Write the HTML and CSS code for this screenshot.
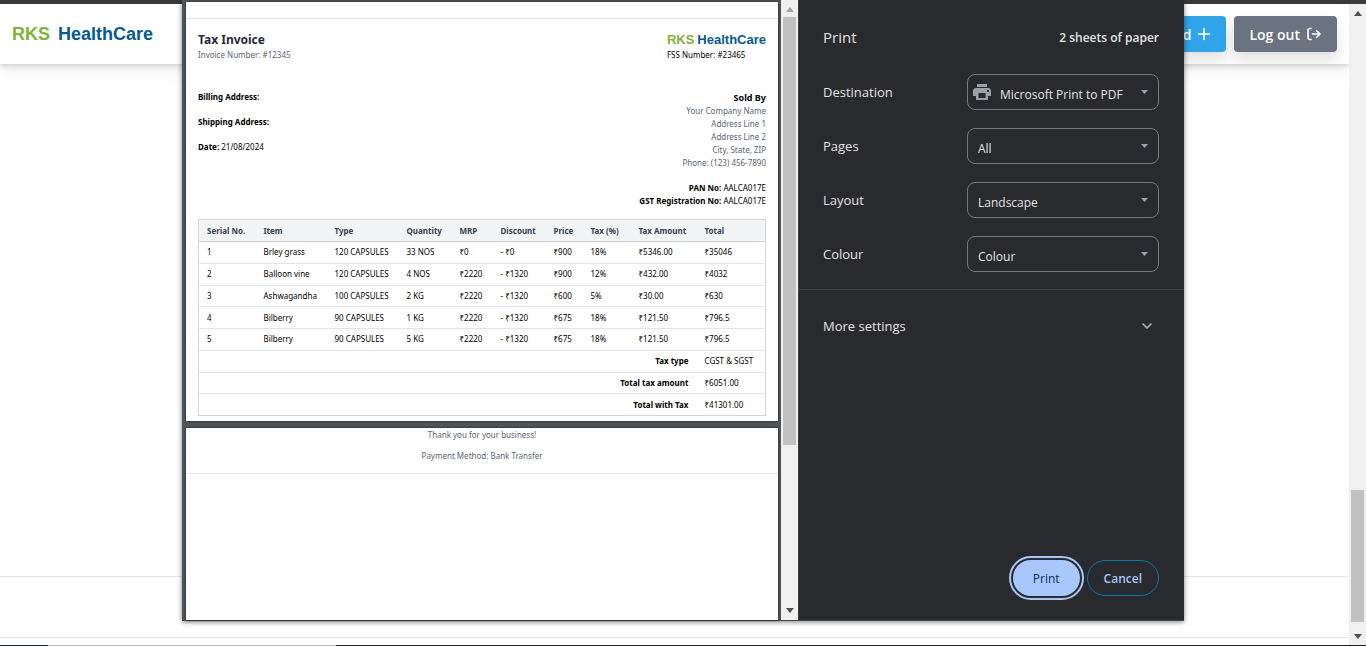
FILE: index.html
```html
<!DOCTYPE html>
<html lang="en">
<head>
<meta charset="utf-8">
<title>RKS HealthCare - Print invoice</title>
<link rel="stylesheet" href="styles.css">
</head>
<body>
<div class="app">
  <div class="app-main">
    <header class="app-header">
      <a class="logo" href="#"><span class="logo-green">RKS</span><span class="logo-blue">HealthCare</span></a>
      <nav class="actions">
        <button class="btn btn-blue" type="button">Add
          <svg width="14" height="14" viewBox="0 0 14 14" fill="none" stroke="currentColor" stroke-width="1.600" stroke-linecap="round"><path d="M7 1.500v11M1.500 7h11"/></svg>
        </button>
        <button class="btn btn-grey" type="button">Log out
          <svg width="16" height="14" viewBox="0 0 16 14" fill="none" stroke="currentColor" stroke-width="1.600" stroke-linecap="round" stroke-linejoin="round"><path d="M5 1.500H4Q2 1.500 2 3.500v7q0 2 2 2h1M6.500 7H14M10.500 3.500 14 7l-3.500 3.500"/></svg>
        </button>
      </nav>
    </header>
    <main class="app-body"></main>
    <footer class="app-footer"></footer>
  </div>
  <div class="scrollbar">
    <svg class="arrow" viewBox="0 0 8 5"><path d="M4 0 8 5H0z"/></svg>
    <div class="track track-low"><div class="thumb thumb-page"></div></div>
    <svg class="arrow" viewBox="0 0 8 5"><path d="M0 0h8L4 5z"/></svg>
  </div>
</div>

<div class="dialog" role="dialog" aria-label="Print">
  <div class="preview">
    <div class="sheets">
      <section class="sheet sheet-first">
        <div class="sheet-top"></div>
        <div class="invoice">
          <div class="row head">
            <div>
              <h1 class="title">Tax Invoice</h1>
              <p class="muted">Invoice Number: #12345</p>
            </div>
            <div>
              <div class="logo logo-small"><span class="logo-green">RKS</span><span class="logo-blue">HealthCare</span></div>
              <p>FSS Number: #23465</p>
            </div>
          </div>
          <div class="row parties">
            <div class="buyer">
              <p><b>Billing Address:</b></p>
              <p><b>Shipping Address:</b></p>
              <p><b>Date:</b> 21/08/2024</p>
            </div>
            <div class="seller">
              <h2 class="subtitle">Sold By</h2>
              <p class="muted">Your Company Name</p>
              <p class="muted">Address Line 1</p>
              <p class="muted">Address Line 2</p>
              <p class="muted">City, State, ZIP</p>
              <p class="muted">Phone: (123) 456-7890</p>
              <div class="tax-ids">
                <p><b>PAN No:</b> AALCA017E</p>
                <p><b>GST Registration No:</b> AALCA017E</p>
              </div>
            </div>
          </div>
          <table class="items">
            <colgroup><col class="c-serial"><col class="c-item"><col class="c-type"><col class="c-mid"><col class="c-mrp"><col class="c-mid"><col class="c-price"><col class="c-tax"><col class="c-amount"><col></colgroup>
            <thead>
              <tr><th>Serial No.</th><th>Item</th><th>Type</th><th>Quantity</th><th>MRP</th><th>Discount</th><th>Price</th><th>Tax (%)</th><th>Tax Amount</th><th>Total</th></tr>
            </thead>
            <tbody>
              <tr><td>1</td><td>Brley grass</td><td>120 CAPSULES</td><td>33 NOS</td><td>₹0</td><td>- ₹0</td><td>₹900</td><td>18%</td><td>₹5346.00</td><td>₹35046</td></tr>
              <tr><td>2</td><td>Balloon vine</td><td>120 CAPSULES</td><td>4 NOS</td><td>₹2220</td><td>- ₹1320</td><td>₹900</td><td>12%</td><td>₹432.00</td><td>₹4032</td></tr>
              <tr><td>3</td><td>Ashwagandha</td><td>100 CAPSULES</td><td>2 KG</td><td>₹2220</td><td>- ₹1320</td><td>₹600</td><td>5%</td><td>₹30.00</td><td>₹630</td></tr>
              <tr><td>4</td><td>Bilberry</td><td>90 CAPSULES</td><td>1 KG</td><td>₹2220</td><td>- ₹1320</td><td>₹675</td><td>18%</td><td>₹121.50</td><td>₹796.5</td></tr>
              <tr><td>5</td><td>Bilberry</td><td>90 CAPSULES</td><td>5 KG</td><td>₹2220</td><td>- ₹1320</td><td>₹675</td><td>18%</td><td>₹121.50</td><td>₹796.5</td></tr>
              <tr><td class="sum" colspan="9">Tax type</td><td>CGST &amp; SGST</td></tr>
              <tr><td class="sum" colspan="9">Total tax amount</td><td>₹6051.00</td></tr>
              <tr><td class="sum" colspan="9">Total with Tax</td><td>₹41301.00</td></tr>
            </tbody>
          </table>
        </div>
      </section>
      <section class="sheet sheet-second">
        <div class="thanks">
          <p>Thank you for your business!</p>
          <p>Payment Method: Bank Transfer</p>
        </div>
      </section>
    </div>
    <div class="scrollbar">
      <svg class="arrow arrow-off" viewBox="0 0 8 5"><path d="M4 0 8 5H0z"/></svg>
      <div class="track"><div class="thumb thumb-preview"></div></div>
      <svg class="arrow" viewBox="0 0 8 5"><path d="M0 0h8L4 5z"/></svg>
    </div>
  </div>
  <form class="settings">
    <div class="settings-head"><h2 class="settings-title">Print</h2><span class="count">2 sheets of paper</span></div>
    <div class="fields">
      <div class="field">
        <label for="destination">Destination</label>
        <div class="picker">
          <svg class="printer" viewBox="0 0 18 16"><path fill="#9aa0a6" fill-rule="evenodd" d="M4 0h10v3H4zM3 4h12a3 3 0 0 1 3 3v5h-3v4H3v-4H0V7a3 3 0 0 1 3-3zM5.500 9v5h7V9zM14 6v2h2V6z"/></svg>
          <select id="destination" class="select with-icon"><option>Microsoft Print to PDF</option></select>
          <svg class="caret" viewBox="0 0 7 4"><path d="M0 0h7L3.500 4z"/></svg>
        </div>
      </div>
      <div class="field">
        <label for="pages">Pages</label>
        <div class="picker">
          <select id="pages" class="select"><option>All</option></select>
          <svg class="caret" viewBox="0 0 7 4"><path d="M0 0h7L3.500 4z"/></svg>
        </div>
      </div>
      <div class="field">
        <label for="layout">Layout</label>
        <div class="picker">
          <select id="layout" class="select"><option>Landscape</option></select>
          <svg class="caret" viewBox="0 0 7 4"><path d="M0 0h7L3.500 4z"/></svg>
        </div>
      </div>
      <div class="field">
        <label for="colour">Colour</label>
        <div class="picker">
          <select id="colour" class="select"><option>Colour</option></select>
          <svg class="caret" viewBox="0 0 7 4"><path d="M0 0h7L3.500 4z"/></svg>
        </div>
      </div>
    </div>
    <button class="more" type="button">More settings
      <svg width="10" height="6" viewBox="0 0 10 6" fill="none" stroke="#b0b3b8" stroke-width="1.500"><path d="M.5.500 5 5 9.500.500"/></svg>
    </button>
    <div class="buttons">
      <button class="pill pill-print" type="button">Print</button>
      <button class="pill pill-cancel" type="button">Cancel</button>
    </div>
  </form>
</div>
</body>
</html>
```
FILE: styles.css
```css
* { box-sizing: border-box; }

body {
  margin: 0;
  background: #fff;
  color: #000;
  font-family: "Noto Sans", "Open Sans", sans-serif;
  overflow: hidden;
}

h1, h2, p { margin: 0; }

button, select { font-family: inherit; }

/* Application behind the dialog */
.app {
  display: flex;
  height: 100vh;
  border-top: 4px solid #3b3b3b;
}

.app::after {
  content: "";
  position: absolute;
  left: 0;
  right: 0;
  bottom: 0;
  height: 1px;
  background: linear-gradient(90deg, #1c2226 48px, #bcbcbc 48px, #bcbcbc 336px, #202020 336px);
}

.app-main {
  flex: 1;
  display: flex;
  flex-direction: column;
}

.app-header {
  display: flex;
  justify-content: space-between;
  align-items: center;
  height: 60px;
  padding: 0 12px;
  box-shadow: 0 8px 16px rgba(0, 0, 0, 0.06), 0 2px 5px rgba(0, 0, 0, 0.14);
}

.logo {
  display: flex;
  gap: 8px;
  font: bold 18px/24px "Liberation Sans", Arial, sans-serif;
  text-decoration: none;
}

.logo-green { color: #7fb239; }
.logo-blue { color: #045a92; }

.logo-small {
  gap: 3px;
  font-size: 13px;
  line-height: 16px;
}

.actions {
  display: flex;
  gap: 8px;
}

.btn {
  display: flex;
  align-items: center;
  gap: 6px;
  height: 36px;
  padding: 0 15px;
  border: 0;
  border-radius: 4px;
  color: #fff;
  font-family: "Open Sans", "Noto Sans", sans-serif;
  font-size: 14px;
  font-weight: 600;
  box-shadow: 0 8px 14px rgba(0, 0, 0, 0.12);
}

.btn-blue { background: #30a4e8; }
.btn-grey { background: #6b7280; }

.app-body {
  flex: 1;
  border-bottom: 1px solid #e5e7eb;
}

.app-footer {
  height: 61px;
  margin-bottom: 8px;
  border-bottom: 1px solid #e5e7eb;
}

/* Scroll bars */
.scrollbar {
  display: flex;
  flex-direction: column;
  align-items: center;
  width: 17px;
  padding: 7px 0 7px;
  background: #f0f0f0;
}

.arrow {
  width: 8px;
  height: 5px;
  fill: #505050;
}

.arrow-off { fill: #a3a3a3; }

.track {
  flex: 1;
  display: flex;
  flex-direction: column;
  width: 13px;
  margin: 5px 0;
}

.track-low {
  justify-content: flex-end;
  margin-bottom: 12px;
}

.thumb { background: #c1c1c1; }
.thumb-page { height: 22%; }
.thumb-preview { height: 73%; }

/* Print dialog */
.dialog {
  position: absolute;
  top: 0;
  left: 50%;
  display: flex;
  width: 1002px;
  max-width: 100%;
  height: calc(100vh - 25px);
  margin-left: -501px;
  background: #292a2d;
  border-bottom: 1px solid #454545;
  box-shadow: 0 1px 5px rgba(0, 0, 0, 0.5);
}

.preview {
  display: flex;
  width: 617px;
  background: #525659;
  border-right: 1px solid #3c3d40;
}

.sheets {
  flex: 1;
  display: flex;
  flex-direction: column;
  gap: 7px;
  padding: 2px 3px 0 4px;
}

.sheet {
  background: #fff;
  box-shadow: 0 0 3px rgba(0, 0, 0, 0.6);
  font-size: 8px;
  line-height: 13px;
}

.sheet-second { flex: 1; }

.sheet-top {
  height: 17px;
  border-bottom: 1px solid #e5e7eb;
}

.invoice { padding: 13px 12px 5px; }

.row {
  display: flex;
  justify-content: space-between;
}

.head { height: 58px; }

.title {
  color: #1f2937;
  font-size: 12px;
  line-height: 16px;
}

.muted { color: #5b6472; }

.parties { height: 129px; }

.buyer {
  display: flex;
  flex-direction: column;
  gap: 12px;
}

.seller {
  padding-top: 1px;
  text-align: right;
}

.subtitle {
  font-size: 9px;
  line-height: 13px;
}

.tax-ids { margin-top: 12px; }

.items {
  width: 100%;
  height: 197px;
  table-layout: fixed;
  border-collapse: collapse;
  border: 1px solid #d1d5db;
  line-height: 12px;
}

.items th, .items td {
  padding: 0 8px;
  text-align: left;
  white-space: nowrap;
}

.items th { height: 22px; }

.items tr { border-bottom: 1px solid #e2e4e8; }
.items tr:last-child { border-bottom-color: #d1d5db; }

.items thead {
  background: #f3f4f6;
  color: #374151;
}

.items thead tr { border-bottom-color: #e2e4e8; }

.items .sum {
  text-align: right;
  font-weight: bold;
}

.c-serial { width: 57px; }
.c-item { width: 71px; }
.c-type { width: 72px; }
.c-mid { width: 53px; }
.c-mrp { width: 41px; }
.c-price { width: 37px; }
.c-tax { width: 48px; }
.c-amount { width: 66px; }

.thanks {
  display: flex;
  flex-direction: column;
  gap: 8px;
  padding-bottom: 11px;
  border-bottom: 1px solid #e5e7eb;
  color: #5b6472;
  text-align: center;
}

/* Settings column */
.settings {
  flex: 1;
  display: flex;
  flex-direction: column;
  color: #e3e3e3;
  font-family: "Open Sans", "Noto Sans", sans-serif;
  font-size: 13px;
}

.settings-head {
  display: flex;
  justify-content: space-between;
  align-items: center;
  height: 74px;
  padding: 0 25px 0 24px;
}

.settings-title {
  font-size: 15px;
  font-weight: 400;
}

.count {
  font-size: 12px;
  font-weight: 600;
}

.fields {
  display: flex;
  flex-direction: column;
  gap: 18px;
  padding: 0 25px 17px 24px;
  border-bottom: 1px solid #3f4042;
}

.field {
  display: flex;
  justify-content: space-between;
  align-items: center;
}

.picker {
  position: relative;
  width: 192px;
}

.select {
  display: block;
  width: 100%;
  height: 36px;
  padding: 4px 24px 0 10px;
  appearance: none;
  background: transparent;
  border: 1px solid #77787a;
  border-radius: 8px;
  color: #e3e3e3;
  font-size: 12px;
}

.with-icon { padding-left: 32px; }

.printer {
  position: absolute;
  left: 6px;
  top: 10px;
  width: 18px;
  height: 16px;
}

.caret {
  position: absolute;
  right: 11px;
  top: 16px;
  width: 7px;
  height: 4px;
  fill: #9aa0a6;
}

.more {
  display: flex;
  justify-content: space-between;
  align-items: center;
  height: 72px;
  padding: 0 32px 0 24px;
  background: none;
  border: 0;
  color: #e3e3e3;
  font-size: 13px;
}

.buttons {
  display: flex;
  justify-content: flex-end;
  gap: 7px;
  margin-top: auto;
  padding: 0 25px 24px;
}

.pill {
  height: 36px;
  padding: 0 16px;
  border-radius: 18px;
  font-size: 12px;
}

.pill-print {
  padding: 0 20px;
  background: #a8c7fa;
  border: 0;
  color: #062e6f;
  font-weight: 500;
  outline: 2px solid #a8c7fa;
  outline-offset: 2px;
}

.pill-cancel {
  background: none;
  border: 1px solid #0878a8;
  color: #a8c7fa;
  font-weight: 600;
}
```
